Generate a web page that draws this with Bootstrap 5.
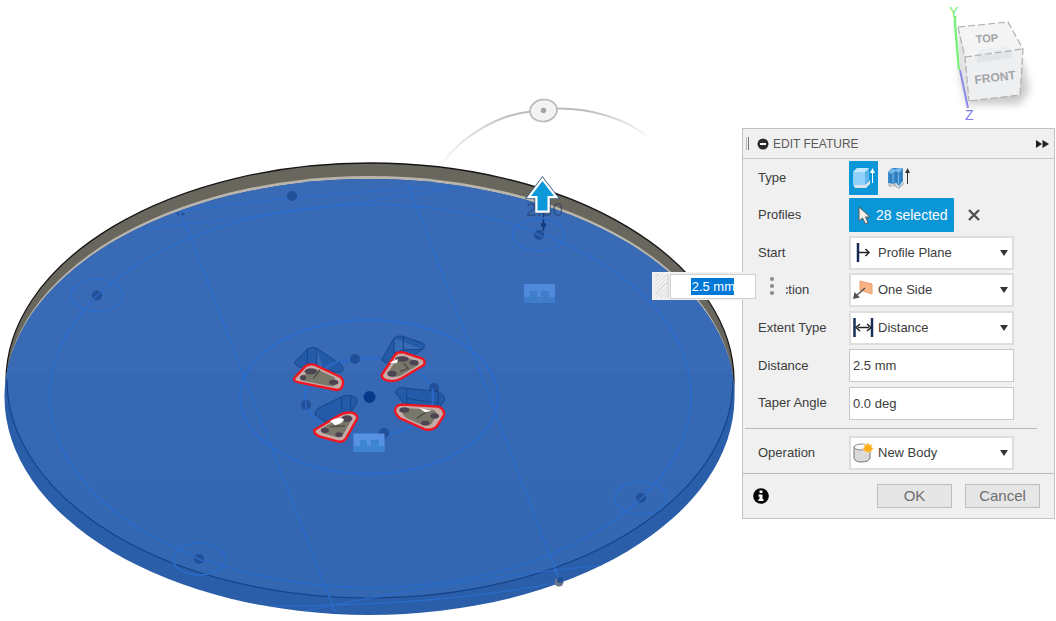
<!DOCTYPE html>
<html lang="en">
<head>
<meta charset="utf-8">
<meta name="viewport" content="width=device-width, initial-scale=1">
<title>Edit Feature</title>
<link href="https://cdn.jsdelivr.net/npm/bootstrap@5.3.0/dist/css/bootstrap.min.css" rel="stylesheet">
<style>
body { font-family: "Liberation Sans", Arial, sans-serif; font-size: 13px; line-height: 16px; color: #3c3c3c; background: #fff; }
svg { display: block; }
.scene { min-width: 0; }
.scene svg { width: 100%; height: auto; }
.side { width: 314px; padding-right: 1px; }
.panel { background: #f0f0f0; border: 1px solid #c3c3c3; }
.panel-head { height: 30px; border-bottom: 1px solid #c6c6c6; padding: 0 5px 0 3px; font-size: 12px; color: #5a5a5a; }
.panel-head h1 { font-size: 12px; line-height: 16px; font-weight: 400; }
.plain { background: none; border: 0; padding: 0; }
.grip { width: 3px; height: 13px; border: solid #777; border-width: 0 1px; border-left-color: #bbb; }
.fields { display: grid; grid-auto-rows: 1fr; min-height: 263px; }
.field { display: grid; grid-template-columns: 91px 165px 1fr; align-items: center; padding-left: 15px; }
.pick { position: relative; }
.pick svg { position: absolute; pointer-events: none; }
.pick .lead-icon { left: 3px; top: 6px; }
.pick .caret { right: 6px; top: 14px; }
.pick select, .entry { width: 100%; height: 34px; background: #fff; border: 2px solid #dedede; border-radius: 0; color: #3c3c3c; appearance: none; outline: 0; }
.pick select { padding: 0 20px 0 27px; }
.entry { height: 33px; border: 1px solid #c8c8c8; padding: 0 3px; }
.kind { width: 29px; height: 34px; border: 0; padding: 0; background: none; border-radius: 1px; }
.kinds { gap: 6px; }
.kind.on, .chosen { background: #0b96d8; }
.chosen { width: 105px; height: 34px; border: 0; border-radius: 1px; padding: 0 0 0 8px; color: #fff; font-size: 14px; white-space: nowrap; }
.clear-pick { margin-left: 14px; }
.rule { height: 1px; background: #b9b9b9; margin: 6px 17px 0 2px; }
.operation { padding-top: 7px; padding-bottom: 3px; }
.foot { height: 45px; border-top: 1px solid #b9b9b9; padding: 0 14px 0 10px; gap: 13px; }
.act { width: 75px; height: 24px; padding: 0; border: 1px solid #bdbdbd; background: #e6e6e6; color: #6e6e6e; font-size: 15px; line-height: 20px; }
/* value box that floats over both the canvas and the panel */
.float-value { position: absolute; left: -91px; top: 143px; width: 134px; height: 28px; background: #f0f0f0; }
.float-value .hatch { width: 14px; align-self: stretch; margin: 2px 1px 2px 3px; border-right: 2px solid #ddd; background: repeating-linear-gradient(135deg, #f0f0f0 0 2px, #dcdcdc 2px 3px); }
.float-value input { width: 86px; height: 25px; border: 1px solid #cfcfcf; padding: 0 20px; text-align: right; background: linear-gradient(#0078d7, #0078d7) 20px 3px / 43px 17px no-repeat #fff; color: #fff; outline: 0; }
.more { margin-left: 14px; }
</style>
</head>
<body>
<main class="d-flex align-items-start overflow-hidden">
  <section class="scene flex-grow-1" aria-label="Model canvas">
    <svg viewBox="0 0 742 621">
      <defs>
        <linearGradient id="fade" gradientUnits="userSpaceOnUse" x1="440" y1="0" x2="650" y2="0">
          <stop offset="0" stop-color="#bbb" stop-opacity=".1"/><stop offset=".35" stop-color="#bbb"/><stop offset=".7" stop-color="#bbb"/><stop offset="1" stop-color="#bbb" stop-opacity=".05"/>
        </linearGradient>
        <linearGradient id="top" x1="0" y1="0" x2="0" y2="1"><stop offset="0" stop-color="#386ab5"/><stop offset="1" stop-color="#3467b2"/></linearGradient>
        <clipPath id="disc"><ellipse cx="369.500" cy="397" rx="365" ry="218"/></clipPath>
        <path id="p1" d="M72 205L105 170Q118 160 135 165L210 200Q222 210 218 225Q215 240 200 240L90 218Q70 215 72 205Z"/>
        <path id="p2" d="M335 195L375 135Q382 125 400 127L455 145Q468 152 462 165L395 205Q380 215 360 213Q335 210 335 195Z"/>
        <path id="p3" d="M133 360L200 320Q225 305 245 308Q262 312 262 325L228 385Q220 397 205 395L150 380Q130 372 133 360Z"/>
        <path id="p4" d="M375 300Q378 285 395 284L505 290Q525 298 522 315L500 350Q485 363 465 358L390 325Q375 312 375 300Z"/>
      </defs>
      <!-- disc body -->
      <ellipse cx="370" cy="381" rx="364" ry="218" fill="#69675d" stroke="#161616" stroke-width="1.300"/>
      <ellipse cx="369.500" cy="394" rx="364.500" ry="218" fill="#b9b5ad"/>
      <ellipse cx="369.500" cy="397" rx="365" ry="218" fill="#2b5ea9"/>
      <g clip-path="url(#disc)">
        <ellipse cx="370" cy="380" rx="363" ry="218" fill="url(#top)"/>
        <path d="M4 381A365 218 0 0 1 735 381L735 400Q733 380 731 372L8 372Q5 380 4 400Z" fill="#386ab5"/>
        <path d="M7 380A363 218 0 0 0 733 380" fill="none" stroke="#154387" stroke-width="1.200"/>
        <g fill="none" stroke="#2a6ccc" stroke-width="1.600">
          <ellipse cx="370.500" cy="396" rx="320.500" ry="191.500"/>
          <ellipse cx="369" cy="397" rx="129" ry="77" stroke-width="2"/>
          <ellipse cx="369" cy="397" rx="64" ry="39" stroke-width="2"/>
          <path d="M181 213L335 612M408 184L560 582"/>
          <path d="M180 211Q300 195 450 186M140 229Q290 214 462 187" stroke-width="1"/>
          <path d="M305 611Q450 580 603 565M270 606Q440 606 560 582" stroke-width="1.200"/>
          <ellipse cx="97" cy="295" rx="26" ry="16"/><ellipse cx="539" cy="235" rx="26" ry="16"/>
          <ellipse cx="641" cy="498" rx="26" ry="16"/><ellipse cx="199" cy="559" rx="26" ry="16"/>
        </g>
        <g fill="#214f98">
          <circle cx="97" cy="295.500" r="5"/><circle cx="539" cy="235" r="5"/><circle cx="641" cy="498" r="5"/><circle cx="199" cy="559" r="5"/>
          <circle cx="292" cy="196" r="5"/><circle cx="306" cy="405" r="5"/><circle cx="355" cy="359" r="5"/><circle cx="434" cy="388" r="5"/><circle cx="384" cy="433" r="5"/>
          <circle cx="178" cy="214" r="1.500"/><circle cx="183" cy="214" r="1.500"/>
        </g>
        <path d="M93 299L101 292M535 233L543 237M637 502L645 495M195 557L203 561M306 400V411" stroke="#2f69bf" stroke-width="1.500"/>
      </g>
      <circle cx="369.500" cy="397" r="6" fill="#08398a"/>
      <circle cx="559" cy="582" r="4.500" fill="#67758c"/><circle cx="560" cy="580" r="3" fill="#214f98"/>
      <!-- pockets -->
      <g transform="translate(270 310) scale(.33333)">
        <g fill="#245ba8" stroke="#174589" stroke-width="3">
          <path d="M75 155L112 118Q125 108 140 115L215 165Q225 180 212 188L160 180L90 172Q72 165 75 155ZM112 118V162M140 115V165L160 180"/>
          <path d="M335 150L372 85Q380 76 395 78L455 98Q470 105 458 118L410 150L350 160ZM372 85V130L400 120L458 118M400 80V125"/>
          <path d="M135 315Q132 305 145 295L205 265Q225 252 245 257Q262 262 262 275L245 305L205 320L165 335ZM215 261V300M242 257V302"/>
          <path d="M377 250Q378 235 395 233L505 245Q525 255 524 270L505 300L400 278ZM410 237V278M505 245V292M410 265L505 280"/>
        </g>
        <path d="M160 180Q185 158 225 150M488 235V290" fill="none" stroke="#2b69c6" stroke-width="6"/>
        <g fill="#c6aaa6" stroke="#f01520" stroke-width="7">
          <use href="#p1"/><use href="#p2"/><use href="#p3"/><use href="#p4"/>
        </g>
        <g fill="#77776a">
          <use href="#p1" transform="translate(43.800 61.200) scale(.7)"/>
          <use href="#p2" transform="translate(119.700 51) scale(.7)"/>
          <use href="#p3" transform="translate(59.100 105.600) scale(.7)"/>
          <use href="#p4" transform="translate(134.700 96) scale(.7)"/>
        </g>
        <g fill="#4d4453">
          <ellipse cx="122" cy="184" rx="18" ry="9"/><ellipse cx="99" cy="203" rx="9" ry="8"/><ellipse cx="191" cy="217" rx="14" ry="8"/>
          <ellipse cx="396" cy="147" rx="20" ry="8"/><ellipse cx="432" cy="158" rx="14" ry="8"/><ellipse cx="366" cy="191" rx="14" ry="9"/>
          <ellipse cx="231" cy="326" rx="16" ry="10"/><ellipse cx="165" cy="361" rx="12" ry="8"/><ellipse cx="207" cy="374" rx="11" ry="7"/>
          <ellipse cx="403" cy="300" rx="15" ry="8"/><ellipse cx="494" cy="318" rx="13" ry="8"/><ellipse cx="466" cy="339" rx="13" ry="7"/>
        </g>
        <path d="M130 205L150 180M400 160L415 175L390 185M180 350L225 348M440 325L470 305" fill="none" stroke="#504d48" stroke-width="4"/>
        <g fill="#fff"><path d="M180 333Q205 318 222 328Q218 342 195 346Z"/><path d="M358 158L385 147L380 160Z"/><path d="M448 294L485 302L465 307Z"/></g>
      </g>
      <!-- midpoint badges -->
      <g>
        <path d="M524 284h31v19h-31z" fill="#5089dc"/><path d="M524 297h31v6h-31zM530 291h7v6h-7zM541 291h8v6h-8z" fill="#3d7dca"/>
        <path d="M353.500 433.500h31v18h-31z" fill="#5792e2"/><path d="M353.500 446h31v6h-31zM360 440h7v6h-7zM371 440h8v6h-8z" fill="#3d86cf"/>
      </g>
      <!-- rotation handle -->
      <path d="M443 162C463 135 500 114 531 111.500M557 108.500C590 108 625 118 648 137" fill="none" stroke="url(#fade)" stroke-width="2"/>
      <ellipse cx="543.500" cy="110.500" rx="13.500" ry="11" fill="#f3f3f3" stroke="#b9b9b9" stroke-width="1.600" transform="rotate(-8 543.500 110.500)"/>
      <circle cx="543.500" cy="110.500" r="2.700" fill="#a4a4a4"/>
      <!-- distance arrow -->
      <text x="526" y="216" font-size="19" fill="#1d315c" opacity=".5">2.50</text>
      <path d="M543.500 212V233" stroke="#143b7d" stroke-width="1.500" stroke-dasharray="5 2"/><circle cx="543.500" cy="225" r="2.500" fill="#143b7d"/>
      <path d="M542.500 181L554 196H547.500V210.500H537.500V196H531Z" fill="none" stroke="#31557b" stroke-width="6"/>
      <path d="M542.500 181L554 196H547.500V210.500H537.500V196H531Z" fill="#0d98d9" stroke="#fff" stroke-width="4.500"/>
      <path d="M542.500 181L554 196H547.500V210.500H537.500V196H531Z" fill="#0d98d9"/>
    </svg>
  </section>

  <aside class="side flex-shrink-0">
    <div class="d-flex justify-content-end">
      <svg width="125" height="128" viewBox="930 0 125 128" role="img" aria-label="View cube">
        <defs><filter id="soft" x="-30%" y="-60%" width="160%" height="220%"><feGaussianBlur stdDeviation="4"/></filter></defs>
        <path d="M960 70L967 104L1020 104L1029 90L1022 60Z" fill="#999" opacity=".55" filter="url(#soft)"/>
        <path d="M955 16V24L959 70" stroke="#7cf07c" stroke-width="2.500" fill="none"/>
        <path d="M958 27L1008 22L1023 49L965 57Z" fill="#f4f4f5"/><path d="M965 57L1023 49L1020 95L969 101Z" fill="#eeeff0"/><path d="M958 27L965 57L969 101L960 72Z" fill="#e3e3e3"/>
        <path d="M977 56L1012 51L1012 58L977 63Z" fill="#e1e5ea"/><path d="M979 50L1007 46L1012 51L977 56Z" fill="#eceff2"/>
        <path d="M958 27L1008 22L1023 49L1020 95L969 101M958 27L965 57L969 101M965 57L1023 49" fill="none" stroke="#b0b0b0" stroke-width="1.200" stroke-dasharray="7 3"/>
        <path d="M960 70L968 108" stroke="#8b8bea" stroke-width="2"/>
        <g font-weight="700" fill="#a3a5a9"><text x="976" y="43" font-size="11" transform="rotate(-4 976 43)">TOP</text><text x="975" y="84" font-size="12" transform="rotate(-7 975 84)">FRONT</text></g>
        <text x="949" y="17" font-size="14" fill="#70f070">Y</text><text x="965" y="120" font-size="14" fill="#7c7cf0">Z</text>
      </svg>
    </div>
    <form class="panel position-relative" onsubmit="return false">
      <header class="panel-head d-flex align-items-center">
        <span class="grip"></span>
        <button class="plain ms-2" type="button" aria-label="Collapse"><svg width="12" height="12"><circle cx="6" cy="6" r="5.500" fill="#2b2b2b"/><path d="M3 6H9" stroke="#fff" stroke-width="2"/></svg></button>
        <h1 class="m-0 ms-1 flex-grow-1">EDIT FEATURE</h1>
        <button class="plain" type="button" aria-label="Dock"><svg width="13" height="10"><path d="M0 1L6 5L0 9ZM6.500 1L13 5L6.500 9Z" fill="#222"/></svg></button>
      </header>
      <div class="fields">
        <div class="field"><span>Type</span>
          <div class="kinds d-flex" role="group" aria-label="Type">
            <button class="kind on d-flex align-items-center justify-content-center" type="button" aria-label="Extrude"><svg width="23" height="24"><path d="M1 18H14L18 14V18L14 22H3Z" fill="#dce3e8"/><path d="M1 6L5 2H17V14L13 19H1Z" fill="#5fb4ee"/><path d="M1 6L5 2H17L13 6Z" fill="#c3e8fe"/><rect x="1" y="6" width="12" height="13" rx="1" fill="#90d1fc"/><path d="M20.500 17V6" stroke="#fff"/><path d="M18 7L20.500 2L23 7Z" fill="#fff"/></svg></button>
            <button class="kind d-flex align-items-center justify-content-center" type="button" aria-label="Thin extrude"><svg width="23" height="24"><path d="M1 17L5 19L8 17L11 21L17 16V18L12 23L7 20L2 21Z" fill="#b9bdc0"/><path d="M1 6L5 2H16V15L12 20L9 17L6 18L1 17Z" fill="#3989c9"/><path d="M1 6L5 2L8 4L11 2H16L12 7L9 5L5 8Z" fill="#74b8e6"/><path d="M4 8V17M9 6V16M14 6V16" stroke="#286da9"/><path d="M6 8V17M11.500 8V18" stroke="#6fb5e5"/><path d="M20.500 18V6" stroke="#333"/><path d="M18 7L20.500 2L23 7Z" fill="#333"/></svg></button>
          </div>
        </div>
        <div class="field"><span>Profiles</span>
          <div class="d-flex align-items-center">
            <button class="chosen d-flex align-items-center" type="button"><svg class="me-1" width="15" height="20"><path d="M2 2V16L5.500 13L8.500 19L11 17.500L8.500 12H13Z" fill="#f3f0ea" stroke="#595959"/></svg>28 selected</button>
            <button class="plain clear-pick" type="button" aria-label="Clear selection"><svg width="12" height="12"><path d="M1 1L11 11M11 1L1 11" stroke="#505050" stroke-width="2.400"/></svg></button>
          </div>
        </div>
        <div class="field"><label for="start">Start</label>
          <div class="pick"><select id="start"><option>Profile Plane</option></select>
            <svg class="lead-icon" width="22" height="22"><path d="M6 1V20" stroke="#152a55" stroke-width="2.500"/><path d="M7 10.500H16" stroke="#222" stroke-width="1.500"/><path d="M13.500 7L17 10.500L13.500 14" fill="none" stroke="#222" stroke-width="1.500"/></svg>
            <svg class="caret" width="8" height="6"><path d="M0 0H8L4 6Z" fill="#333"/></svg></div>
        </div>
        <div class="field"><label for="direction">Direction</label>
          <div class="pick"><select id="direction"><option>One Side</option></select>
            <svg class="lead-icon" width="22" height="22"><path d="M8 2L20 5V15L8 11Z" fill="#f9b384" stroke="#eba06d"/><path d="M13 9L4 17" stroke="#555" stroke-width="1.500"/><path d="M1 20L2.500 13L8 18.500Z" fill="#555"/></svg>
            <svg class="caret" width="8" height="6"><path d="M0 0H8L4 6Z" fill="#333"/></svg></div>
        </div>
        <div class="field"><label for="extent">Extent Type</label>
          <div class="pick"><select id="extent"><option>Distance</option></select>
            <svg class="lead-icon" width="22" height="22"><path d="M2.500 1V20M20 1V20" stroke="#173157" stroke-width="2.500"/><path d="M6 10.500H17" stroke="#222" stroke-width="1.500"/><path d="M8 7L4 10.500L8 14M15 7L19 10.500L15 14" fill="none" stroke="#222" stroke-width="1.500"/></svg>
            <svg class="caret" width="8" height="6"><path d="M0 0H8L4 6Z" fill="#333"/></svg></div>
        </div>
        <div class="field"><label for="distance">Distance</label><input class="entry" id="distance" type="text" value="2.5 mm"></div>
        <div class="field"><label for="taper">Taper Angle</label><input class="entry" id="taper" type="text" value="0.0 deg"></div>
      </div>
      <div class="rule"></div>
      <div class="field operation"><label for="operation">Operation</label>
        <div class="pick"><select id="operation"><option>New Body</option></select>
          <svg class="lead-icon" width="22" height="22"><path d="M2 5V16Q3 20 9 20Q17 20 18 16V5Z" fill="#d9d9d9" stroke="#777"/><ellipse cx="10" cy="5" rx="8" ry="3" fill="#fafafa" stroke="#888"/><path d="M16 0L17.500 3L20.500 2L19.500 5L22 6.500L19.500 8L20 10.500L17.500 9.500L16 12L14.500 9.500L11.500 10.500L12.500 8L10 6.500L12.500 5L11.500 2L14.500 3Z" fill="#fcaf18" stroke="#fff" stroke-width=".5"/></svg>
          <svg class="caret" width="8" height="6"><path d="M0 0H8L4 6Z" fill="#333"/></svg></div>
      </div>
      <footer class="foot d-flex align-items-center">
        <button class="plain me-auto" type="button" aria-label="Information"><svg width="16" height="16"><circle cx="8" cy="8" r="7.800" fill="#050505"/><path d="M6.500 2.500H9.500V5H6.500ZM5.500 6.500H9.500V11H10.500V13H5.500V11H6.500V8.500H5.500Z" fill="#fff"/></svg></button>
        <button class="act" type="button">OK</button>
        <button class="act" type="button">Cancel</button>
      </footer>
      <div class="float-value d-flex align-items-center">
        <span class="hatch"></span>
        <input type="text" value="2.5 mm" aria-label="Distance on canvas">
        <button class="plain more" type="button" aria-label="More"><svg width="4" height="18"><circle cx="2" cy="2" r="2" fill="#8a8a8a"/><circle cx="2" cy="9" r="2" fill="#8a8a8a"/><circle cx="2" cy="16" r="2" fill="#8a8a8a"/></svg></button>
      </div>
    </form>
  </aside>
</main>
<script src="https://cdn.jsdelivr.net/npm/bootstrap@5.3.0/dist/js/bootstrap.bundle.min.js"></script>
</body>
</html>
